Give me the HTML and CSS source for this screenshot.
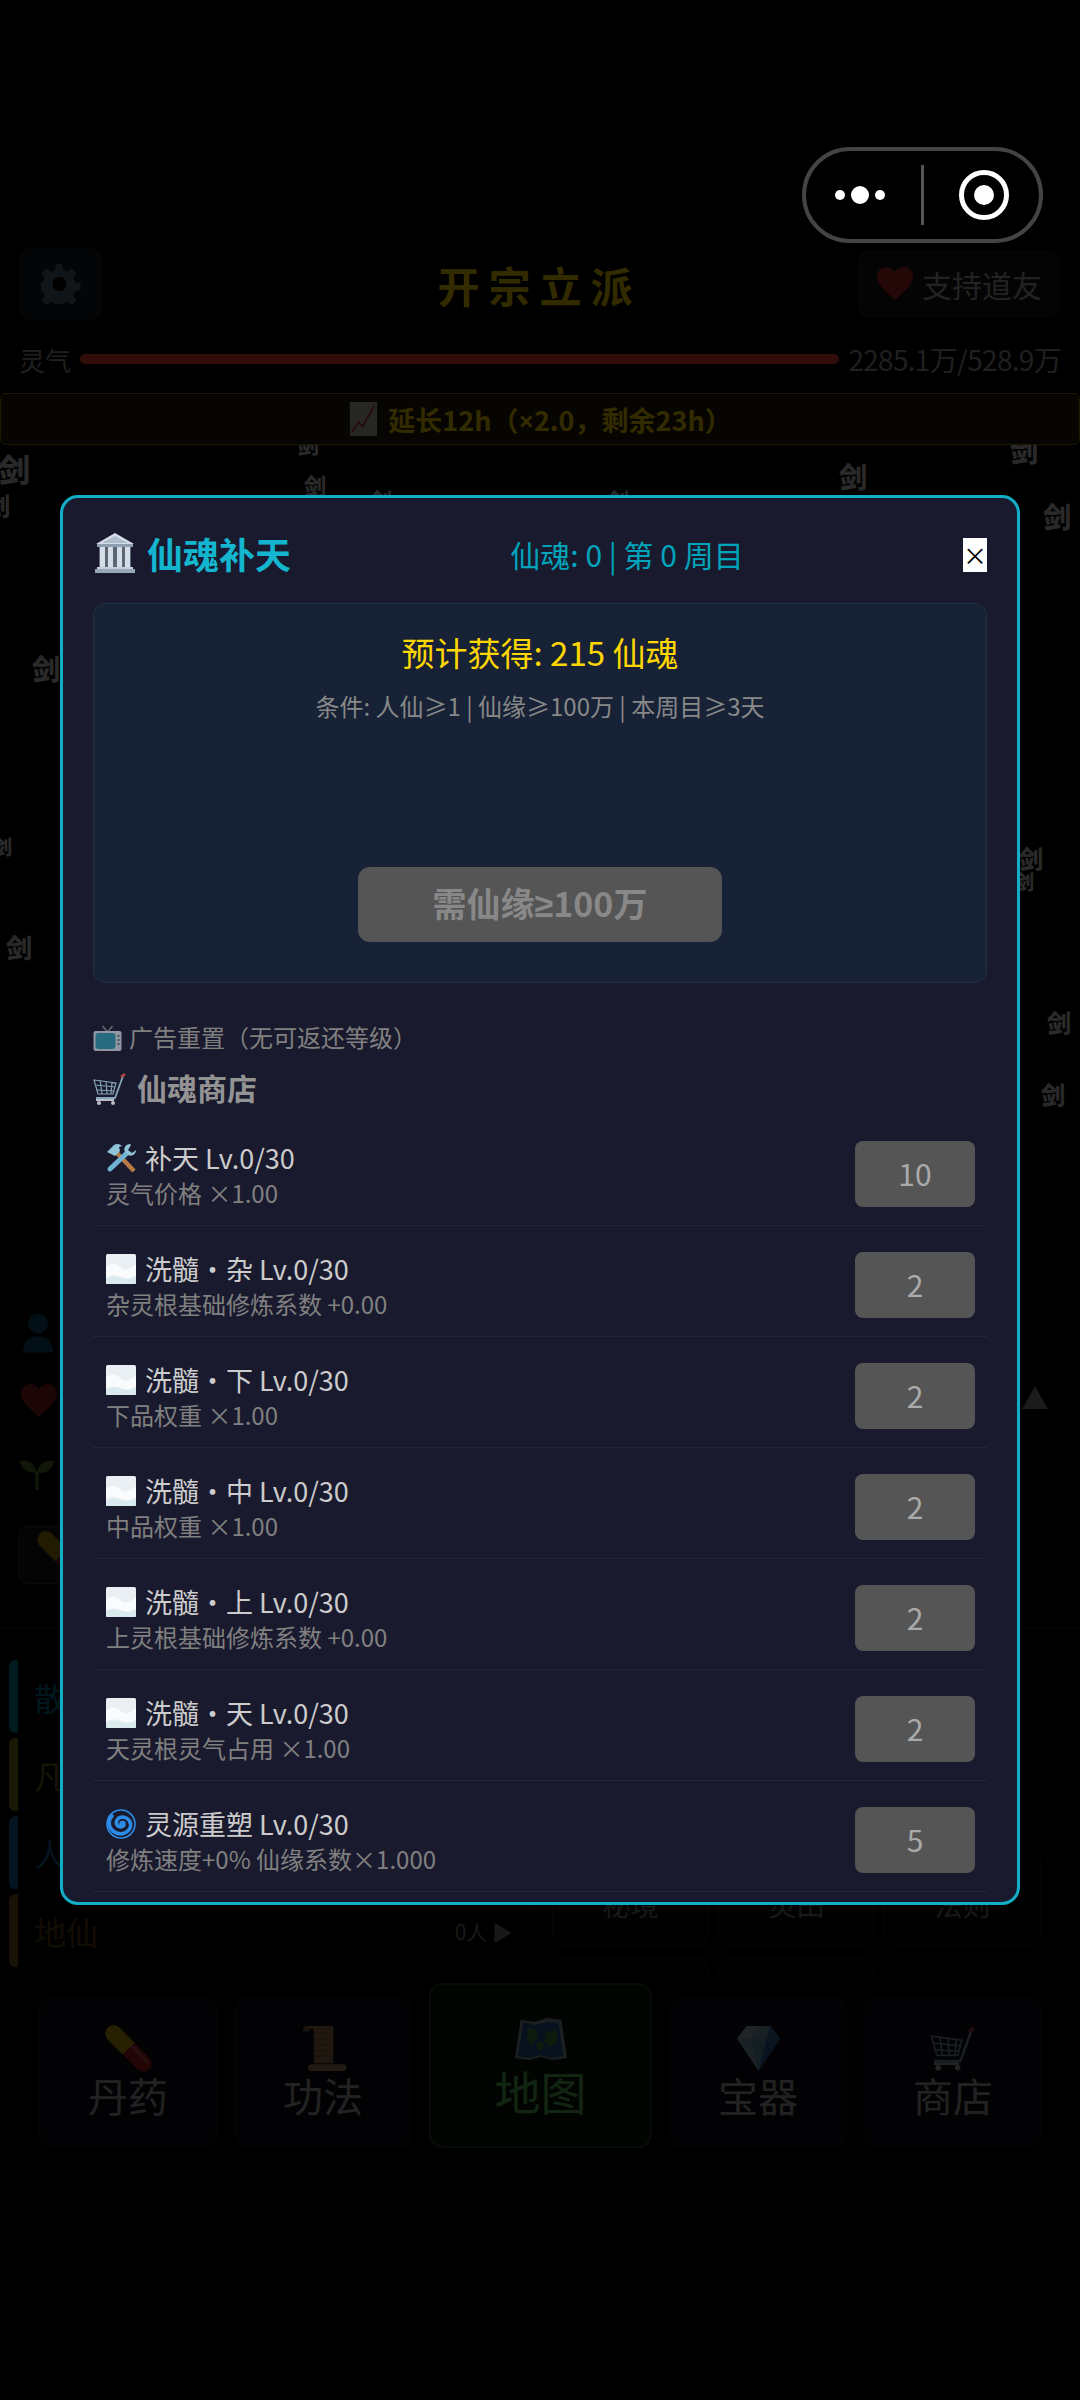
FILE: index.html
```html
<!DOCTYPE html>
<html lang="zh-CN">
<head>
    <meta charset="UTF-8">
    <meta name="viewport" content="width=device-width, initial-scale=1.0">
    <title>开宗立派</title>
    <link rel="stylesheet" href="styles.css">
</head>
<body>
    <!-- Shared emoji style icons -->
    <svg class="defs" aria-hidden="true">
        <symbol id="i-temple" viewBox="0 0 40 40">
            <polygon points="20,0 39,11 1,11" fill="#d5dee8"/>
            <polygon points="20,3 33,10 7,10" fill="#aebccb"/>
            <rect x="2" y="11" width="36" height="3" fill="#8f9fb0"/>
            <rect x="4" y="14" width="32" height="20" fill="#5b6775"/>
            <rect x="5" y="14" width="5" height="20" fill="#d5dee8"/>
            <rect x="13" y="14" width="5" height="20" fill="#d5dee8"/>
            <rect x="22" y="14" width="5" height="20" fill="#d5dee8"/>
            <rect x="30" y="14" width="5" height="20" fill="#d5dee8"/>
            <rect x="2" y="34" width="36" height="2" fill="#c3cfdb"/>
            <rect x="0" y="36" width="40" height="4" fill="#98a7b7"/>
        </symbol>
        <symbol id="i-cloud" viewBox="0 0 30 30">
            <rect width="30" height="30" rx="1.5" fill="#e9eff2"/>
            <path d="M0 13c6-5 10-4 14 0s10 3 16-3v12c-6 3-10 3-15 1s-10-3-15 1z" fill="#f9fbfc"/>
            <path d="M0 25c5-3 10-3 15-1s10 1 15-2v6.500a1.500 1.500 0 0 1-1.500 1.500h-27A1.500 1.500 0 0 1 0 28.500z" fill="#d9ebef"/>
        </symbol>
        <symbol id="i-tools" viewBox="0 0 30 30">
            <path d="M9 8l19 20" stroke="#b87a45" stroke-width="4.5" fill="none"/>
            <path d="M1 9l7-7c3-2 6-1 8 1l-3 1 1 4-5 5z" fill="#8fc3d8"/>
            <path d="M21 10L4 26" stroke="#6fb2d2" stroke-width="5" stroke-linecap="round" fill="none"/>
            <path d="M24 1c-4 0-7 4-5 8l3 3c4 2 8-1 8-5l-4 3-4-3 3-5z" fill="#8fc3d8"/>
        </symbol>
        <symbol id="i-spiral" viewBox="0 0 30 30">
            <path d="M15 15c0-2 3-2 3 0 0 3-5 4-7 1-2-4 1-8 6-8 6 1 9 6 7 11-3 6-11 8-17 3C2 18 2 11 6 7" stroke="#2d8ce6" stroke-width="3.6" fill="none" stroke-linecap="round"/>
            <circle cx="15" cy="15" r="14" fill="none" stroke="#2d8ce6" stroke-width="1.6"/>
        </symbol>
        <symbol id="i-tv" viewBox="0 0 28 26">
            <path d="M9 1l5 6 5-6" stroke="#8a949c" stroke-width="1.4" fill="none"/>
            <rect x="0" y="6" width="28" height="20" rx="2" fill="#c4ccd2"/>
            <rect x="2" y="8" width="20" height="16" rx="3" fill="#2e8ea3"/>
            <rect x="24" y="10" width="2" height="2" fill="#5c666e"/>
            <rect x="24" y="14" width="2" height="2" fill="#5c666e"/>
            <rect x="24" y="18" width="2" height="2" fill="#5c666e"/>
        </symbol>
        <symbol id="i-cart" viewBox="0 0 34 32">
            <path d="M1 7l22 3-3 11H5zM7 7l2 14M13 8l1 13M19 9l-1 12M2 12l20 2M3 17l18 1" stroke="#9fc9d8" stroke-width="1.2" fill="none"/>
            <path d="M30 3l-8 22H3" stroke="#9fc9d8" stroke-width="1.8" fill="none"/>
            <path d="M28 4l4-3" stroke="#d9534f" stroke-width="2.4"/>
            <path d="M3 27h18" stroke="#dfe8ec" stroke-width="2"/>
            <circle cx="6" cy="30" r="2" fill="#dfe8ec"/>
            <circle cx="20" cy="30" r="2" fill="#dfe8ec"/>
        </symbol>
        <symbol id="i-pill" viewBox="0 0 48 48">
            <g transform="rotate(45 24 24)">
                <rect x="-6" y="15.500" width="60" height="17" rx="8.500" fill="#e0281c"/>
                <path d="M24 18h21a6 6 0 0 1 5 4H24z" fill="#f06a5c"/>
                <path d="M24 15.500H2.500a8.500 8.500 0 0 0 0 17H24z" fill="#ffd400"/>
            </g>
        </symbol>
        <symbol id="i-scroll" viewBox="0 0 48 48">
            <path d="M8 1h26v38H14V7a3 3 0 0 0-6-1z" fill="#c99a66"/>
            <path d="M3 6a4 4 0 0 1 5-5l3 3-3 3z" fill="#a87844"/>
            <path d="M12 40h32a3 3 0 0 1 0 7H12a4 4 0 0 1-4-4 4 4 0 0 1 4-3z" fill="#d8ab77"/>
            <path d="M15 8h15M15 14h15M15 20h15M15 26h15M15 32h15" stroke="#a87844" stroke-width="1.4"/>
        </symbol>
        <symbol id="i-map" viewBox="0 0 56 42" preserveAspectRatio="none">
            <path d="M6 2l15 2 14-4 15 2 6 38-15 2-13-3-13 3-15-2z" fill="#b9c8d2"/>
            <path d="M9 4l12 3 14-3 12 1 5 33-13 2-11-3-13 3-12-2z" fill="#2d6cc4"/>
            <path d="M14 10l9 1 1 8-6 9-5-6zM33 14l11-2 2 12-8 5-6-5zM24 24l7 1-2 8-6-2z" fill="#4caf50"/>
        </symbol>
        <symbol id="i-gem" viewBox="0 0 48 48">
            <polygon points="12,1 36,1 46,14 24,47 2,14" fill="#a9d8f2"/>
            <polygon points="12,1 24,1 16,14 2,14" fill="#d4eefb"/>
            <polygon points="36,1 46,14 32,14" fill="#3f8fd0"/>
            <polygon points="32,14 46,14 24,47" fill="#2f7cc0"/>
            <polygon points="16,14 32,14 24,47" fill="#7fc2ea"/>
        </symbol>
        <symbol id="i-heart" viewBox="0 0 36 34">
            <path d="M18 33C6 22 0 17 0 9.500 0 4 4 0 9 0c4 0 7 2 9 5 2-3 5-5 9-5 5 0 9 4 9 9.500C36 17 30 22 18 33z" fill="#e5352b"/>
        </symbol>
        <symbol id="i-gear" viewBox="0 0 40 40">
            <path d="M16.500 0h7l1 6 4 1.700 5-3.500 5 5-3.500 5 1.700 4 6 1v7l-6 1-1.700 4 3.500 5-5 5-5-3.500-4 1.700-1 6h-7l-1-6-4-1.700-5 3.500-5-5 3.500-5-1.700-4-6-1v-7l6-1 1.700-4-3.500-5 5-5 5 3.500 4-1.700z" fill="#4a6a7c" transform="translate(-1 0) scale(.95 1)"/>
            <circle cx="18.500" cy="20" r="7" fill="#000"/>
        </symbol>
        <symbol id="i-person" viewBox="0 0 30 40">
            <circle cx="15" cy="11" r="10" fill="#1d82c4"/>
            <path d="M0 40c0-10 5-16 15-16s15 6 15 16z" fill="#1d82c4"/>
        </symbol>
        <symbol id="i-seed" viewBox="0 0 34 34">
            <path d="M17 34V16" stroke="#8bc34a" stroke-width="3.600"/>
            <path d="M17 16C14 6 6 3 0 5c1 8 8 13 17 11zM17 16c2-9 10-13 17-11-1 9-9 14-17 11z" fill="#8bc34a"/>
        </symbol>
        <symbol id="i-chart" viewBox="0 0 32 40">
            <rect width="32" height="40" fill="#e8e8e8"/>
            <path d="M2 36L10 24l5 5L29 4" stroke="#e5352b" stroke-width="2" fill="none"/>
        </symbol>
    </svg>

    <div class="app">
        <!-- Falling sword characters behind the page -->
        <div class="swords">
            <span class="s1">剑</span><span class="s2">剑</span><span class="s3">剑</span><span class="s4">剑</span>
            <span class="s5">剑</span><span class="s6">剑</span><span class="s7">剑</span><span class="s8">剑</span>
            <span class="s9">剑</span><span class="s10">剑</span><span class="s11">剑</span><span class="s12">剑</span>
            <span class="s13">剑</span><span class="s14">剑</span><span class="s15">剑</span><span class="s16">剑</span>
        </div>

        <header class="topbar">
            <div class="settings"><svg class="gear"><use href="#i-gear"/></svg></div>
            <h1 class="game-title">开宗立派</h1>
            <div class="support"><svg class="support-heart"><use href="#i-heart"/></svg>支持道友</div>
        </header>

        <div class="aura">
            <span class="aura-label">灵气</span>
            <div class="aura-bar"></div>
            <span class="aura-value">2285.1万/528.9万</span>
        </div>

        <div class="banner"><svg class="banner-icon"><use href="#i-chart"/></svg><span>延长12h（<span class="latin">×</span>2.0，剩余23h）</span></div>

        <section class="stats">
            <div class="stat"><svg class="stat-person"><use href="#i-person"/></svg></div>
            <div class="stat stat-split"><svg class="stat-heart"><use href="#i-heart"/></svg><span class="collapse"></span></div>
            <div class="stat"><svg class="stat-seed"><use href="#i-seed"/></svg></div>
            <div class="pill-card"><svg class="pill-icon"><use href="#i-pill"/></svg></div>
        </section>

        <section class="lower">
            <div class="realms">
                <div class="realm realm-teal"><span>散修</span></div>
                <div class="realm realm-olive"><span>凡人</span></div>
                <div class="realm realm-blue"><span>人仙</span></div>
                <div class="realm realm-brown"><span>地仙</span><small>0人 ▶</small></div>
            </div>
            <div class="cards">
                <div class="card">秘境</div>
                <div class="card">灵田</div>
                <div class="card">法则</div>
                <div class="card"></div>
                <div class="card"></div>
            </div>
        </section>

        <nav class="tabs">
            <div class="tab"><svg class="tab-icon"><use href="#i-pill"/></svg>丹药</div>
            <div class="tab"><svg class="tab-icon"><use href="#i-scroll"/></svg>功法</div>
            <div class="tab tab-active"><svg class="tab-map"><use href="#i-map"/></svg>地图</div>
            <div class="tab"><svg class="tab-icon"><use href="#i-gem"/></svg>宝器</div>
            <div class="tab"><svg class="tab-icon"><use href="#i-cart"/></svg>商店</div>
        </nav>
    </div>

    <!-- Dim layer and dialog -->
    <div class="overlay">
        <div class="modal">
            <div class="modal-head">
                <div class="modal-title"><svg class="title-icon"><use href="#i-temple"/></svg>仙魂补天</div>
                <div class="modal-sub">仙魂: 0 | 第 0 周目</div>
                <button class="close-btn">×</button>
            </div>

            <div class="panel">
                <div class="gain">预计获得: 215 仙魂</div>
                <div class="cond">条件: 人仙≥1 | 仙缘≥100万 | 本周目≥3天</div>
                <button class="reborn-btn">需仙缘<span class="latin">≥</span>100万</button>
            </div>

            <div class="ad-reset"><svg class="ad-icon"><use href="#i-tv"/></svg>广告重置（无可返还等级）</div>
            <h2 class="shop-title"><svg class="cart-icon"><use href="#i-cart"/></svg>仙魂商店</h2>

            <div class="shop-row">
                <div class="shop-info">
                    <div class="shop-name"><svg class="shop-icon"><use href="#i-tools"/></svg>补天 Lv.0/30</div>
                    <div class="shop-desc">灵气价格 ×1.00</div>
                </div>
                <button class="buy-btn">10</button>
            </div>
            <div class="shop-row">
                <div class="shop-info">
                    <div class="shop-name"><svg class="shop-icon"><use href="#i-cloud"/></svg>洗髓・杂 Lv.0/30</div>
                    <div class="shop-desc">杂灵根基础修炼系数 +0.00</div>
                </div>
                <button class="buy-btn">2</button>
            </div>
            <div class="shop-row">
                <div class="shop-info">
                    <div class="shop-name"><svg class="shop-icon"><use href="#i-cloud"/></svg>洗髓・下 Lv.0/30</div>
                    <div class="shop-desc">下品权重 ×1.00</div>
                </div>
                <button class="buy-btn">2</button>
            </div>
            <div class="shop-row">
                <div class="shop-info">
                    <div class="shop-name"><svg class="shop-icon"><use href="#i-cloud"/></svg>洗髓・中 Lv.0/30</div>
                    <div class="shop-desc">中品权重 ×1.00</div>
                </div>
                <button class="buy-btn">2</button>
            </div>
            <div class="shop-row">
                <div class="shop-info">
                    <div class="shop-name"><svg class="shop-icon"><use href="#i-cloud"/></svg>洗髓・上 Lv.0/30</div>
                    <div class="shop-desc">上灵根基础修炼系数 +0.00</div>
                </div>
                <button class="buy-btn">2</button>
            </div>
            <div class="shop-row">
                <div class="shop-info">
                    <div class="shop-name"><svg class="shop-icon"><use href="#i-cloud"/></svg>洗髓・天 Lv.0/30</div>
                    <div class="shop-desc">天灵根灵气占用 ×1.00</div>
                </div>
                <button class="buy-btn">2</button>
            </div>
            <div class="shop-row">
                <div class="shop-info">
                    <div class="shop-name"><svg class="shop-icon"><use href="#i-spiral"/></svg>灵源重塑 Lv.0/30</div>
                    <div class="shop-desc">修炼速度+0% 仙缘系数×1.000</div>
                </div>
                <button class="buy-btn">5</button>
            </div>
        </div>
    </div>

    <!-- Mini program capsule -->
    <div class="capsule">
        <div class="capsule-dots"><i></i><i class="dot-big"></i><i></i></div>
        <div class="capsule-line"></div>
        <div class="capsule-target"><i></i></div>
    </div>
</body>
</html>
```

FILE: styles.css
```css
* {
    margin: 0;
    padding: 0;
    box-sizing: border-box;
}

html, body {
    width: 1080px;
    height: 2400px;
    overflow: hidden;
}

body {
    position: relative;
    background: #000;
    font-family: "Noto Sans CJK SC", "Noto Sans", sans-serif;
    color: #ccc;
}

.defs {
    position: absolute;
    width: 0;
    height: 0;
}

.latin {
    font-family: "Noto Sans", sans-serif;
}

/* Page behind the dialog */
.app {
    position: relative;
    height: 2400px;
    padding-top: 248px;
}

.swords {
    position: absolute;
    inset: 0;
    font-weight: 900;
    color: #ccc;
    line-height: 1;
}

.swords span {
    position: absolute;
}

.s1 { left: -2px; top: 452px; font-size: 32px; }
.s2 { left: -14px; top: 493px; font-size: 24px; }
.s3 { left: 297px; top: 432px; font-size: 22px; }
.s4 { left: 304px; top: 473px; font-size: 22px; }
.s5 { left: 370px; top: 488px; font-size: 22px; }
.s6 { left: 607px; top: 488px; font-size: 22px; }
.s7 { left: 839px; top: 462px; font-size: 28px; }
.s8 { left: 1010px; top: 436px; font-size: 28px; }
.s9 { left: 1043px; top: 502px; font-size: 28px; }
.s10 { left: 32px; top: 654px; font-size: 28px; }
.s11 { left: -8px; top: 837px; font-size: 20px; }
.s12 { left: 6px; top: 934px; font-size: 26px; }
.s13 { left: 1019px; top: 846px; font-size: 24px; }
.s14 { left: 1014px; top: 872px; font-size: 20px; }
.s15 { left: 1047px; top: 1010px; font-size: 24px; }
.s16 { left: 1041px; top: 1082px; font-size: 24px; }

.topbar {
    position: relative;
    display: grid;
    grid-template-columns: 1fr auto 1fr;
    align-items: center;
    height: 72px;
    padding: 0 20px 0 19px;
}

.settings {
    display: flex;
    align-items: center;
    justify-content: center;
    width: 83px;
    height: 72px;
    background: #141a1f;
    border-radius: 12px;
}

.gear {
    width: 40px;
    height: 40px;
}

.game-title {
    font-size: 42px;
    font-weight: 700;
    letter-spacing: 9px;
    color: #ffd700;
}

.support {
    display: flex;
    align-items: center;
    justify-self: end;
    gap: 9px;
    width: 203px;
    height: 68px;
    padding-left: 20px;
    background: #141416;
    border-radius: 12px;
    font-size: 30px;
    color: #aaa;
}

.support-heart {
    width: 36px;
    height: 34px;
    opacity: 0.75;
}

.aura {
    position: relative;
    display: flex;
    align-items: center;
    gap: 9px;
    height: 40px;
    margin-top: 19px;
    padding: 0 19px;
    font-size: 26px;
    color: #999;
}

.aura-bar {
    flex: 1;
    height: 10px;
    background: #f44336;
    border-radius: 5px;
}

.aura-value {
    font-size: 28px;
    letter-spacing: -0.7px;
}

.banner {
    position: relative;
    display: flex;
    align-items: center;
    justify-content: center;
    gap: 9px;
    height: 52px;
    margin-top: 14px;
    background: #1e1a05;
    border: 1px solid #8a7a10;
    border-radius: 6px;
    font-size: 27px;
    font-weight: 700;
    color: #ffd700;
}

.banner-icon {
    width: 31px;
    height: 34px;
    opacity: 0.8;
}

.stats {
    position: relative;
    height: 1182px;
    padding: 867px 32px 0 18px;
}

.stats svg {
    opacity: 0.6;
}

.stat {
    display: flex;
    height: 72px;
    padding-left: 2px;
}

.stat-split {
    justify-content: space-between;
}

.stat-person {
    width: 30px;
    height: 41px;
    margin-left: 3px;
}

.stat-heart {
    width: 38px;
    height: 34px;
}

.stat-seed {
    width: 34px;
    height: 34px;
}

/* up triangle at the end of the row */
.collapse {
    width: 0;
    height: 0;
    margin-top: 2px;
    border-left: 13px solid transparent;
    border-right: 13px solid transparent;
    border-bottom: 23px solid #888;
}

.pill-card {
    display: flex;
    align-items: center;
    width: 200px;
    height: 58px;
    margin-top: -2px;
    padding-left: 18px;
    background: #141414;
    border: 1px solid #333;
    border-radius: 8px;
}

.pill-icon {
    width: 48px;
    height: 48px;
}

.lower {
    position: relative;
    display: flex;
    height: 348px;
    border-top: 1px solid #222;
    overflow: hidden;
}

.realms {
    display: flex;
    flex-direction: column;
    gap: 5px;
    width: 534px;
    padding: 32px 20px 0 9px;
    border-right: 1px solid #151515;
}

.realm {
    display: flex;
    align-items: center;
    justify-content: space-between;
    flex: none;
    height: 73px;
    padding-left: 16px;
    border-left: 9px solid #888;
    border-radius: 6px;
    font-size: 32px;
}

.realm small {
    font-size: 21px;
    color: #777;
}

.realm-teal { border-color: #00838f; color: #00738f; }
.realm-olive { border-color: #7d7a1c; color: #6d6a18; }
.realm-blue { border-color: #1565a0; color: #105a90; }
.realm-brown { border-color: #7a5a20; color: #5c4418; }

.cards {
    display: grid;
    grid-template-columns: repeat(3, 157px);
    grid-auto-rows: 100px;
    gap: 10px 9px;
    align-content: start;
    padding: 219px 0 0 18px;
}

.card {
    display: flex;
    align-items: flex-end;
    justify-content: center;
    padding-bottom: 22px;
    background: #08080c;
    border: 1px solid #1c1c24;
    border-radius: 14px;
    font-size: 28px;
    color: #777;
}

.tabs {
    position: relative;
    display: flex;
    align-items: flex-end;
    gap: 17px;
    margin: 8px 0 0 39px;
}

.tab {
    display: flex;
    flex-direction: column;
    align-items: center;
    flex: 0 0 178px;
    height: 151px;
    padding-top: 27px;
    background: #0c0c14;
    border: 1px solid #1a1a24;
    border-radius: 14px;
    font-size: 40px;
    line-height: 46px;
    color: #aaa;
}

.tab-icon {
    width: 47px;
    height: 47px;
    opacity: 0.75;
}

.tab-active {
    flex: 0 0 223px;
    height: 165px;
    padding-top: 33px;
    background: #0c180c;
    border: 2px solid #1e3e1e;
    font-size: 46px;
    line-height: 52px;
    color: #5cb85c;
}

.tab-map {
    width: 52px;
    height: 42px;
    margin-bottom: 4px;
    opacity: 0.75;
}

/* Dialog */
.overlay {
    position: absolute;
    inset: 0;
    padding: 495px 60px 0;
    background: rgba(0, 0, 0, 0.8);
}

.modal {
    height: 1410px;
    padding: 28px 30px 0;
    background: #1a1a2e;
    border: 3px solid #12aec6;
    border-radius: 18px;
    overflow: hidden;
}

.modal-head {
    display: flex;
    align-items: center;
    justify-content: space-between;
    height: 54px;
    margin-bottom: 23px;
}

.modal-title {
    display: flex;
    align-items: center;
    gap: 12px;
    font-size: 36px;
    font-weight: 700;
    color: #13b5cf;
}

.title-icon {
    width: 40px;
    height: 40px;
    margin-left: 2px;
}

.modal-sub {
    margin-top: 1px;
    font-size: 30px;
    color: #00a5bb;
}

.close-btn {
    width: 24px;
    height: 34px;
    margin-top: 4px;
    background: #fff;
    border: none;
    font-family: inherit;
    font-size: 24px;
    line-height: 34px;
    color: #000;
}

.panel {
    display: flex;
    flex-direction: column;
    align-items: center;
    height: 380px;
    padding: 23px 0 40px;
    background: #172236;
    border: 1px solid #1f3145;
    border-radius: 12px;
}

.gain {
    font-size: 33px;
    line-height: 50px;
    color: #ffd700;
}

.cond {
    margin-top: 10px;
    font-size: 24px;
    line-height: 38px;
    color: #888;
}

.reborn-btn {
    width: 364px;
    height: 75px;
    margin-top: auto;
    padding-bottom: 4px;
    background: #555;
    border: none;
    border-radius: 12px;
    font-family: inherit;
    font-size: 34px;
    font-weight: 700;
    color: #888;
}

.ad-reset {
    display: flex;
    align-items: center;
    gap: 7px;
    height: 36px;
    margin-top: 35px;
    font-size: 24px;
    color: #808080;
}

.ad-icon {
    width: 29px;
    height: 26px;
    margin-top: 3px;
    opacity: 0.7;
}

.shop-title {
    display: flex;
    align-items: center;
    gap: 10px;
    height: 44px;
    margin: 11px 0 6px;
    font-size: 30px;
    font-weight: 700;
    color: #939393;
}

.cart-icon {
    width: 34px;
    height: 32px;
    margin-top: 3px;
    opacity: 0.8;
}

.shop-row {
    display: flex;
    justify-content: space-between;
    height: 111px;
    padding: 26px 12px 0 13px;
    border-bottom: 1px solid #24243a;
}

.shop-info {
    margin-top: -2px;
}

.shop-name {
    display: flex;
    align-items: center;
    gap: 9px;
    height: 36px;
    font-size: 27px;
    color: #ccc;
}

.shop-icon {
    width: 30px;
    height: 30px;
    margin-top: 2px;
}

.shop-desc {
    margin-top: 2px;
    font-size: 24px;
    line-height: 32px;
    color: #808080;
}

.buy-btn {
    width: 120px;
    height: 66px;
    padding-bottom: 2px;
    background: #555;
    border: none;
    border-radius: 8px;
    font-family: inherit;
    font-size: 30px;
    color: #aaa;
}

/* Capsule sits above the dim layer */
.capsule {
    position: absolute;
    left: 802px;
    top: 147px;
    display: flex;
    align-items: center;
    width: 241px;
    height: 96px;
    border: 4px solid #444;
    border-radius: 48px;
    background: #000;
}

.capsule-dots {
    display: flex;
    align-items: center;
    gap: 6px;
    margin-left: 29px;
}

.capsule-dots i {
    width: 10px;
    height: 10px;
    background: #fff;
    border-radius: 50%;
}

.capsule-dots .dot-big {
    width: 18px;
    height: 18px;
}

.capsule-line {
    width: 3px;
    height: 60px;
    margin-left: 36px;
    background: #555;
}

.capsule-target {
    display: flex;
    align-items: center;
    justify-content: center;
    width: 50px;
    height: 50px;
    margin-left: 35px;
    border: 5px solid #fff;
    border-radius: 50%;
}

.capsule-target i {
    width: 20px;
    height: 20px;
    background: #fff;
    border-radius: 50%;
}
```
